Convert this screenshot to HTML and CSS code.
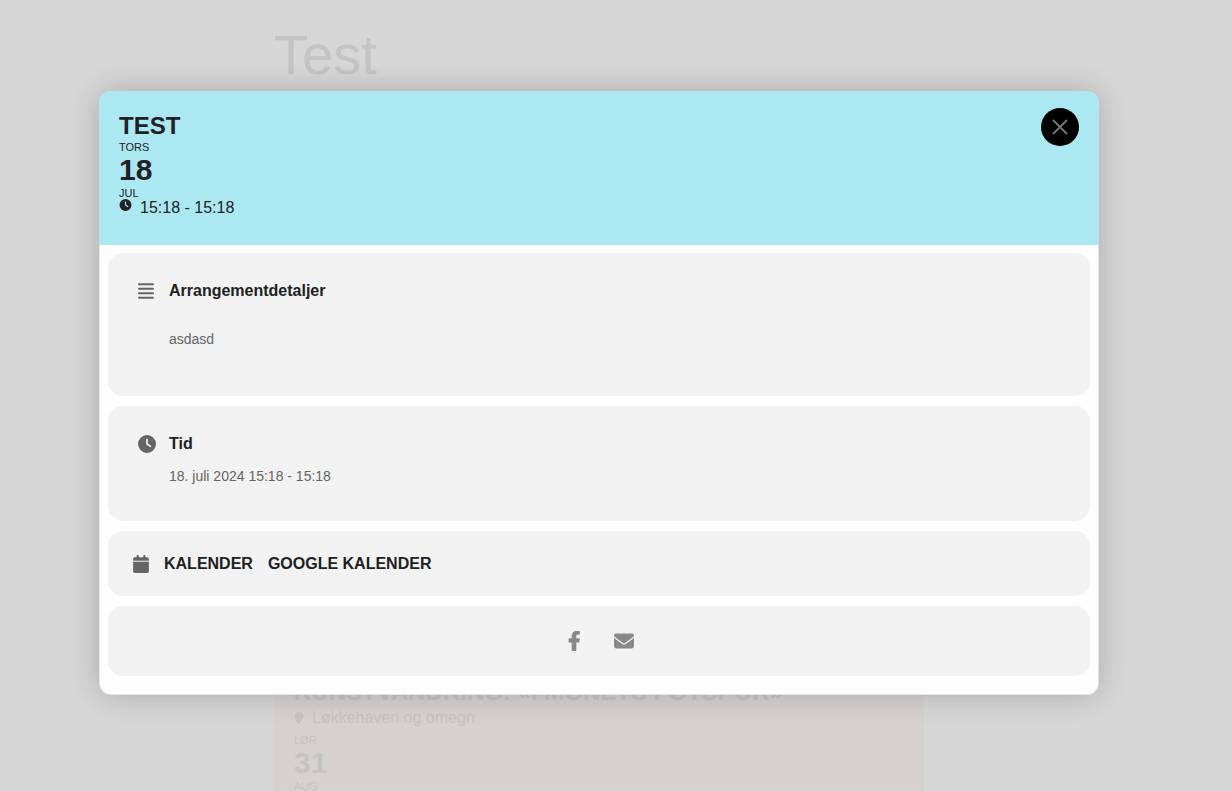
FILE: index.html
```
<!DOCTYPE html>
<html lang="nb">
<head>
  <meta charset="UTF-8" />
  <meta name="viewport" content="width=device-width, initial-scale=1.0" />
  <title>Test</title>
  <link rel="stylesheet" href="styles.css">
</head>
<body>
  <!-- Siden bak -->
  <main class="page">
    <h1 class="page-title">Test</h1>

    <div class="event-list">
      <div class="event">
        <h2 class="event-title">KUNSTVANDRING: «I MONETS FOTSPOR»</h2>
        <p class="event-place">
          <svg class="pin" viewBox="0 0 384 512" aria-hidden="true"><path d="M192 0C86 0 0 86 0 192c0 88 118 244 170 309a28 28 0 0 0 44 0c52-65 170-221 170-309C384 86 298 0 192 0z"/></svg>
          Løkkehaven og omegn
        </p>
        <p class="small">LØR</p>
        <p class="day">31</p>
        <p class="small">AUG</p>
      </div>
    </div>
  </main>

  <!-- Lightbox -->
  <div class="overlay">
    <div class="lightbox" role="dialog" aria-labelledby="lightbox-title">
      <header class="lightbox-header">
        <div>
          <h2 class="event-title" id="lightbox-title">TEST</h2>
          <p class="small">TORS</p>
          <p class="day">18</p>
          <p class="small">JUL</p>
          <p class="time">
            <svg class="time-icon" viewBox="0 0 512 512" aria-hidden="true"><path d="M256 0a256 256 0 1 1 0 512A256 256 0 1 1 256 0zM232 120V256c0 8 4 15.500 10.700 20l96 64c11 7.400 25.900 4.400 33.300-6.700s4.400-25.900-6.700-33.300L280 243.200V120c0-13.300-10.700-24-24-24s-24 10.700-24 24z"/></svg>
            15:18 - 15:18
          </p>
        </div>
        <button class="close" type="button" aria-label="Lukk">
          <svg viewBox="0 0 16 16" aria-hidden="true"><path d="M1 1l14 14M15 1L1 15"/></svg>
        </button>
      </header>

      <div class="lightbox-body">
        <section class="card details">
          <svg class="card-icon" viewBox="0 0 18 18" aria-hidden="true"><path d="M1 2.300h14M1 6.800h14M1 11.200h14M1 15.700h14" class="lines"/></svg>
          <div>
            <h3 class="card-title">Arrangementdetaljer</h3>
            <p class="card-text description">asdasd</p>
          </div>
        </section>

        <section class="card details">
          <svg class="card-icon" viewBox="0 0 512 512" aria-hidden="true"><path d="M256 0a256 256 0 1 1 0 512A256 256 0 1 1 256 0zM232 120V256c0 8 4 15.500 10.700 20l96 64c11 7.400 25.900 4.400 33.300-6.700s4.400-25.900-6.700-33.300L280 243.200V120c0-13.300-10.700-24-24-24s-24 10.700-24 24z"/></svg>
          <div>
            <h3 class="card-title">Tid</h3>
            <p class="card-text">18. juli 2024 15:18 - 15:18</p>
          </div>
        </section>

        <section class="card calendar">
          <svg class="calendar-icon" viewBox="0 0 448 512" aria-hidden="true"><path d="M96 32V64H48C21.500 64 0 85.500 0 112v48H448V112c0-26.500-21.500-48-48-48H352V32c0-17.700-14.300-32-32-32s-32 14.300-32 32V64H160V32c0-17.700-14.300-32-32-32S96 14.300 96 32zM448 192H0V464c0 26.500 21.500 48 48 48H400c26.500 0 48-21.500 48-48V192z"/></svg>
          <a href="#">KALENDER</a>
          <a href="#">GOOGLE KALENDER</a>
        </section>

        <section class="card share">
          <a href="#" aria-label="Del på Facebook">
            <svg viewBox="0 0 320 512" aria-hidden="true"><path class="facebook" d="M279.140 288l14.220-92.660h-88.910v-60.130c0-25.350 12.420-50.060 52.240-50.060h40.420V6.260S260.430 0 225.360 0c-73.220 0-121.080 44.380-121.080 124.720v70.620H22.890V288h81.390v224h100.170V288z"/></svg>
          </a>
          <a href="#" aria-label="Del på e-post">
            <svg viewBox="0 0 512 512" aria-hidden="true"><path d="M48 64C21.500 64 0 85.500 0 112c0 15.100 7.100 29.300 19.200 38.400L236.800 313.600c11.400 8.500 27 8.500 38.400 0L492.800 150.400c12.100-9.100 19.200-23.300 19.200-38.400c0-26.500-21.500-48-48-48H48zM0 176V384c0 35.300 28.700 64 64 64H448c35.300 0 64-28.700 64-64V176L294.400 339.200c-22.800 17.100-54 17.100-76.800 0L0 176z"/></svg>
          </a>
        </section>
      </div>
    </div>
  </div>
</body>
</html>
```
FILE: styles.css
```
* {
  box-sizing: border-box;
}

html, body {
  height: 100%;
}

/* Ingen scrolling mens lightboxen er åpen */
body {
  margin: 0;
  overflow: hidden;
  background-color: #d6d6d6;
  font-family: "Liberation Sans", Arial, sans-serif;
  color: #202124;
}

h1, h2, h3, p {
  margin: 0;
}

a {
  color: inherit;
  text-decoration: none;
}

/* Siden bak */
.page {
  padding: 23px 34px 0 0;
  color: #c4c4c4;
}

.page-title,
.event-list {
  max-width: 650px;
  margin: 0 auto;
}

.page-title {
  font-size: 56px;
  font-weight: normal;
  line-height: 64px;
}

.event-list {
  padding-top: 570px;
}

.event {
  padding: 20px;
  background-color: #d6d1d0;
}

.event-title {
  font-size: 24px;
  line-height: 30px;
}

.event-place {
  display: flex;
  align-items: center;
  gap: 8px;
  margin-bottom: 5px;
  font-size: 16px;
  line-height: 22px;
}

.pin {
  width: 10px;
  height: 12px;
  fill: #c4c4c4;
}

.small {
  font-size: 11px;
  line-height: 12px;
}

.day {
  font-size: 30px;
  font-weight: bold;
  line-height: 34px;
}

/* Lightbox */
.overlay {
  position: fixed;
  inset: 0;
  padding: 91px 34px 0 0;
}

.lightbox {
  max-width: 1000px;
  margin: 0 auto;
  border-radius: 12px;
  box-shadow: 0 0 30px rgba(0, 0, 0, 0.2);
}

.lightbox-header {
  display: flex;
  justify-content: space-between;
  align-items: flex-start;
  padding: 20px 20px 28px;
  border-radius: 12px 12px 0 0;
  background-color: #ace8f1;
}

.time {
  display: flex;
  gap: 8px;
  font-size: 16px;
  line-height: 18px;
}

.time-icon {
  width: 13px;
  height: 12px;
  fill: #202124;
}

.close {
  display: flex;
  align-items: center;
  justify-content: center;
  width: 38px;
  height: 38px;
  margin-top: -3px;
  padding: 0;
  border: none;
  border-radius: 50%;
  background-color: #000;
  cursor: pointer;
}

.close svg {
  width: 16px;
  height: 16px;
  fill: none;
  stroke: #777;
  stroke-width: 1.8;
}

.lightbox-body {
  display: flex;
  flex-direction: column;
  gap: 10px;
  padding: 8px 8px 18px;
  border: 1px solid #e4e4e4;
  border-top: none;
  border-radius: 0 0 12px 12px;
  background-color: #fdfdfd;
}

.card {
  display: flex;
  border-radius: 15px;
  background-color: #f2f2f2;
}

.details {
  gap: 13px;
  padding: 26px 30px 35px;
}

.card-icon {
  width: 18px;
  height: 18px;
  margin-top: 3px;
  fill: #656565;
}

.lines {
  stroke: #656565;
  stroke-width: 2;
  stroke-linecap: round;
}

.card-title {
  font-size: 16px;
  line-height: 24px;
}

.card-text {
  margin-top: 10px;
  font-size: 14px;
  line-height: 20px;
  color: #656565;
}

.description {
  margin: 26px 0 12px;
}

.calendar {
  align-items: center;
  gap: 15px;
  padding: 20px 25px 19px;
  font-size: 16px;
  font-weight: bold;
  line-height: 26px;
}

.calendar-icon {
  width: 16px;
  height: 18px;
  fill: #656565;
}

.share {
  justify-content: center;
  padding: 25px;
}

.share a {
  display: flex;
  justify-content: center;
  width: 50px;
}

.share svg {
  height: 20px;
  fill: #888;
}

.facebook {
  stroke: #888;
  stroke-width: 16;
}
```
